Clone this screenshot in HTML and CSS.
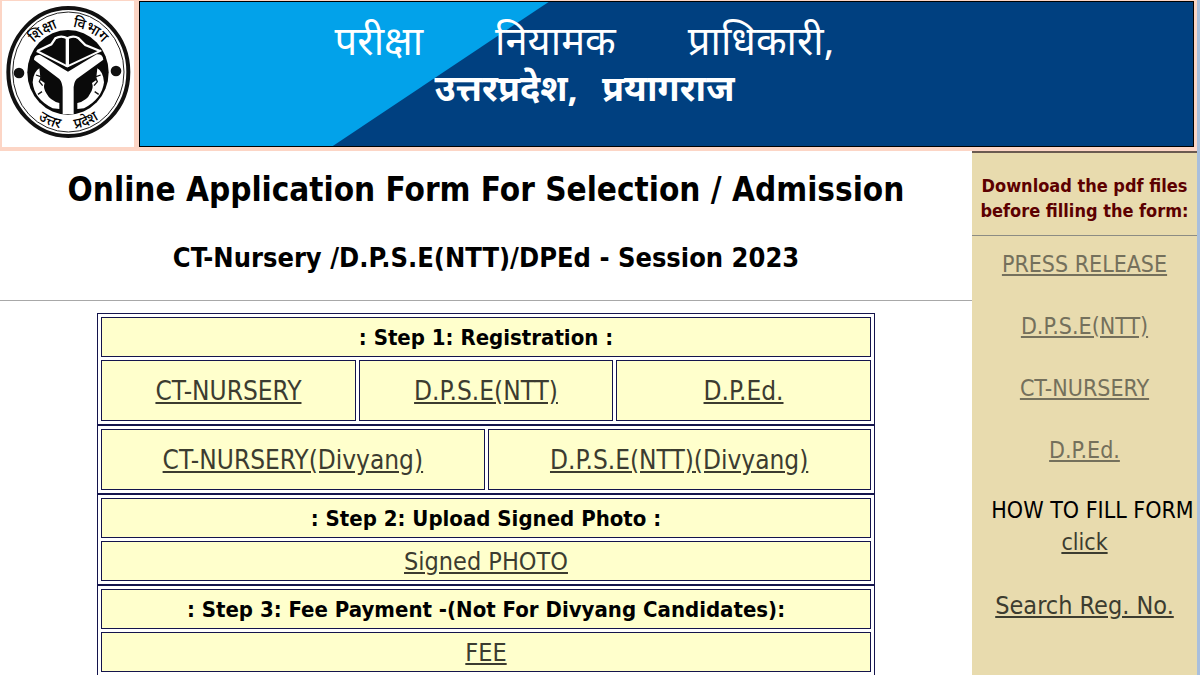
FILE: index.html
```
<!DOCTYPE html>
<html lang="en">
<head>
	<meta charset="UTF-8">
	<title>Online Application Form</title>
	<link rel="stylesheet" href="styles.css">
</head>
<body>
	<div class="page">
		<header class="header">
			<div class="logo">
				<svg viewBox="6 6 396 432" role="img" aria-label="Logo">
					<defs>
						<path id="arcTop" d="M72 218 A133 134 0 0 1 338 218"/>
						<path id="arcBottom" d="M43 218 A162 172 0 0 0 367 218"/>
					</defs>
					<ellipse cx="205" cy="219" rx="180" ry="192" fill="#fff" stroke="#111" stroke-width="12"/>
					<ellipse cx="205" cy="219" rx="167" ry="180" fill="none" stroke="#222" stroke-width="3"/>
					<ellipse cx="204" cy="220" rx="122" ry="127" fill="#0a0a0a"/>
					<circle cx="57" cy="222" r="16" fill="#111"/>
					<circle cx="348" cy="216" r="16" fill="#111"/>
					<!-- bow -->
					<path d="M112 156 L154 136 L166 118 Q184 108 202 118 Q220 108 236 118 L256 138 L300 156" fill="none" stroke="#fff" stroke-width="7"/>
					<path d="M202 116 V204" stroke="#fff" stroke-width="10"/>
					<path d="M110 156 L202 202 L304 154" fill="none" stroke="#fff" stroke-width="6"/>
					<!-- rivers -->
					<path d="M102 182 Q102 166 120 168 L204 218 L290 166 Q308 164 310 182 L230 240 Q220 250 221 274 V345 H188 V274 Q188 250 178 240 Z" fill="#fff"/>
					<!-- fishes -->
					<path d="M118 208 Q100 218 98 250 Q102 300 158 328 L178 330 V312 Q150 304 140 284 Q128 268 134 252 L122 244 Z" fill="#fff"/>
					<path d="M292 208 Q310 218 312 250 Q306 300 252 328 L232 330 V312 Q262 304 270 284 Q282 268 276 252 L288 244 Z" fill="#fff"/>
					<path d="M108 228 L124 234 L118 248 L128 260 M126 278 L114 286 M302 228 L286 234 L292 248 L282 260 M284 278 L296 286" fill="none" stroke="#111" stroke-width="4"/>
					<text class="logo-text"><textPath href="#arcTop" startOffset="50%" text-anchor="middle">शिक्षा &#160;&#160; विभाग</textPath></text>
					<text class="logo-text"><textPath href="#arcBottom" startOffset="50%" text-anchor="middle">उत्तर &#160;&#160; प्रदेश</textPath></text>
				</svg>
			</div>
			<div class="banner">
				<svg class="banner-bg" viewBox="0 0 1054 144" preserveAspectRatio="none" aria-hidden="true">
					<path d="M0 0 H409 L193 144 H0 Z" fill="#02a2ea"/>
				</svg>
				<p class="line1" lang="hi"><span>परीक्षा</span> <span>नियामक</span> <span>प्राधिकारी,</span></p>
				<p class="line2" lang="hi"><span>उत्तरप्रदेश,</span> <span>प्रयागराज</span></p>
			</div>
		</header>

		<div class="content">
			<main class="main">
				<div class="title">
					<h1>Online Application Form For Selection / Admission</h1>
					<h2>CT-Nursery /D.P.S.E(NTT)/DPEd - Session 2023</h2>
				</div>
				<div class="steps">
					<table>
						<tr><th colspan="3">: Step 1: Registration :</th></tr>
						<tr class="tall">
							<td><a href="#">CT-NURSERY</a></td>
							<td><a href="#">D.P.S.E(NTT)</a></td>
							<td><a href="#">D.P.Ed.</a></td>
						</tr>
					</table>
					<table>
						<tr class="tall">
							<td><a href="#">CT-NURSERY(Divyang)</a></td>
							<td><a href="#">D.P.S.E(NTT)(Divyang)</a></td>
						</tr>
					</table>
					<table>
						<tr><th>: Step 2: Upload Signed Photo :</th></tr>
						<tr><td><a href="#">Signed PHOTO</a></td></tr>
					</table>
					<table>
						<tr><th>: Step 3: Fee Payment -(Not For Divyang Candidates):</th></tr>
						<tr><td><a href="#">FEE</a></td></tr>
					</table>
				</div>
			</main>

			<aside class="side">
				<h3>Download the pdf files before filling the form:</h3>
				<ul>
					<li><a href="#">PRESS RELEASE</a></li>
					<li><a href="#">D.P.S.E(NTT)</a></li>
					<li><a href="#">CT-NURSERY</a></li>
					<li><a href="#">D.P.Ed.</a></li>
				</ul>
				<p class="howto">HOW TO FILL FORM <a href="#">click</a></p>
				<p class="search"><a href="#">Search Reg. No.</a></p>
			</aside>
		</div>
	</div>
</body>
</html>
```

FILE: styles.css
```
*{
	box-sizing: border-box;
}
body{
	height: 100vh;
	margin: 0;
	padding-right: 3px;
	background: #a9bfdc;
	font-family: "DejaVu Sans Condensed", "Noto Sans", sans-serif;
	color: #000;
}
h1,
h2,
h3,
p,
ul{
	margin: 0;
	padding: 0;
}
.page{
	min-height: 100vh;
	display: flex;
	flex-direction: column;
	background: #fff;
}
.header{
	display: flex;
	gap: 5px;
	padding: 1px 3px 4px 2px;
	background: #fcd5c5;
}
.logo{
	width: 132px;
	height: 146px;
	background: #fff;
}
.logo svg{
	display: block;
	width: 132px;
	height: 144px;
}
.logo-text{
	font-family: "Noto Sans", sans-serif;
	font-size: 43px;
	font-weight: 500;
}
.banner{
	position: relative;
	flex: 1;
	padding: 14px 164px 0 0;
	border: 1px solid #000;
	background: #004080;
	color: #fff;
	font-family: "Noto Sans", sans-serif;
}
.banner-bg{
	position: absolute;
	top: 0;
	left: 0;
	width: 100%;
	height: 100%;
}
.banner p{
	position: relative;
	display: flex;
	justify-content: center;
	line-height: 48px;
}
.banner .line1{
	gap: 72px;
	font-size: 40px;
}
.banner .line2{
	gap: 24px;
	font-size: 36px;
	font-weight: 700;
}
.content{
	flex: 1;
	display: flex;
}
.main{
	flex: 1;
}
.title{
	padding: 17px 0 24px;
	border-bottom: 1px solid #a8a8a8;
	text-align: center;
}
.title h1{
	font-size: 33px;
	line-height: 44px;
}
.title h2{
	margin-top: 28px;
	font-size: 27px;
	line-height: 36px;
}
.steps{
	width: 80%;
	margin: 12px auto 0;
}
table{
	width: 100%;
	table-layout: fixed;
	border: 1px solid #14144c;
	border-spacing: 3px;
}
th,
td{
	height: 40px;
	padding: 0;
	border: 1px solid #14144c;
	background: #ffffcc;
	text-align: center;
}
th{
	font-size: 22px;
}
td{
	font-size: 25px;
}
.tall td{
	height: 61px;
	font-size: 26px;
}
td a{
	color: #3c3c30;
}
.side{
	width: 225px;
	border-top: 2px solid #6b5a50;
	background: #e8dbae;
	text-align: center;
	font-size: 23px;
}
.side h3{
	padding: 20px 0 12px;
	border-bottom: 1px solid #8c8c84;
	color: #5c0000;
	font-size: 18px;
	line-height: 25px;
}
.side ul{
	list-style: none;
}
.side li{
	height: 62px;
	line-height: 56px;
}
.side li a{
	color: #74705c;
}
.howto{
	padding-top: 10px;
	line-height: 32px;
	text-indent: 16px;
}
.howto a,
.search a{
	color: #3c3c30;
}
.search{
	padding-top: 30px;
	font-size: 25px;
	line-height: 36px;
}
```
